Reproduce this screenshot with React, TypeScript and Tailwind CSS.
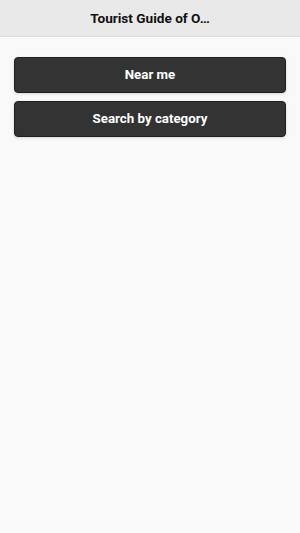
import React from "react";

export default function App() {
  return (
    <div className="min-h-[533px] bg-[#f9f9f9] font-['Roboto',sans-serif]">
      <div className="h-[37px] bg-[#e9e9e9] border-b border-[#dddddd] flex items-center justify-center">
        <h1 className="text-[13.6px] font-bold text-[#111] whitespace-nowrap">
          Tourist Guide of O…
        </h1>
      </div>
      <div className="px-[14px] pt-[20px] flex flex-col gap-[8px]">
        <button className="h-[36px] w-full rounded-[4px] bg-[#333333] border border-[#1f1f1f] text-white text-[13.3px] font-bold shadow-[0_1px_3px_rgba(0,0,0,0.15)]">
          Near me
        </button>
        <button className="h-[36px] w-full rounded-[4px] bg-[#333333] border border-[#1f1f1f] text-white text-[13.3px] font-bold shadow-[0_1px_3px_rgba(0,0,0,0.15)]">
          Search by category
        </button>
      </div>
    </div>
  );
}
